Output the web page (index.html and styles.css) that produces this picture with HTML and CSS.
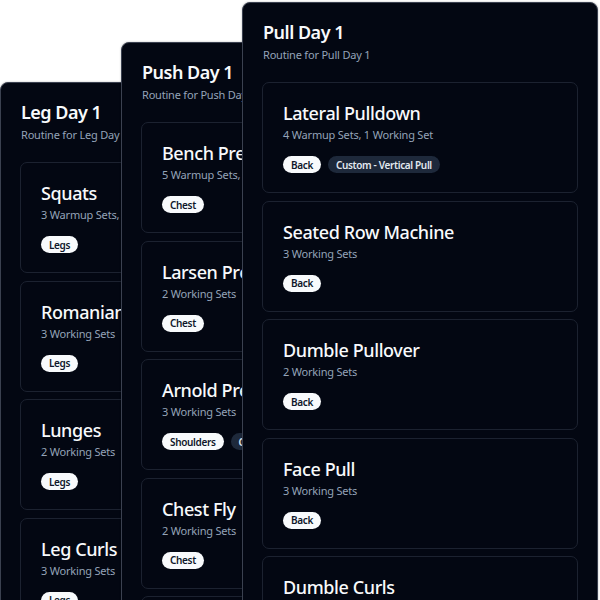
FILE: index.html
```html
<!DOCTYPE html>
<html>
<head>
<meta charset="utf-8">
<link rel="stylesheet" href="styles.css">
</head>
<body>
<div class="desk">
  <section class="routine routine-leg">
    <header class="routine-head">
      <h1 class="routine-title">Leg Day 1</h1>
      <p class="routine-sub">Routine for Leg Day 1</p>
    </header>
    <div class="ex-list">
      <article class="ex"><h2 class="ex-name">Squats</h2><p class="ex-sets">3 Warmup Sets, 1 Working Set</p><div class="tags"><span class="tag">Legs</span></div></article>
      <article class="ex"><h2 class="ex-name">Romanian Deadlift</h2><p class="ex-sets">3 Working Sets</p><div class="tags"><span class="tag">Legs</span></div></article>
      <article class="ex"><h2 class="ex-name">Lunges</h2><p class="ex-sets">2 Working Sets</p><div class="tags"><span class="tag">Legs</span></div></article>
      <article class="ex"><h2 class="ex-name">Leg Curls</h2><p class="ex-sets">3 Working Sets</p><div class="tags"><span class="tag">Legs</span></div></article>
    </div>
  </section>
  <section class="routine routine-push">
    <header class="routine-head">
      <h1 class="routine-title">Push Day 1</h1>
      <p class="routine-sub">Routine for Push Day 1</p>
    </header>
    <div class="ex-list">
      <article class="ex"><h2 class="ex-name">Bench Press</h2><p class="ex-sets">5 Warmup Sets, 1 Working Set</p><div class="tags"><span class="tag">Chest</span></div></article>
      <article class="ex"><h2 class="ex-name">Larsen Press</h2><p class="ex-sets">2 Working Sets</p><div class="tags"><span class="tag">Chest</span></div></article>
      <article class="ex"><h2 class="ex-name">Arnold Press</h2><p class="ex-sets">3 Working Sets</p><div class="tags"><span class="tag">Shoulders</span><span class="tag tag-dark">Custom</span></div></article>
      <article class="ex"><h2 class="ex-name">Chest Fly</h2><p class="ex-sets">2 Working Sets</p><div class="tags"><span class="tag">Chest</span></div></article>
      <article class="ex"><h2 class="ex-name">Triceps</h2><p class="ex-sets">2 Working Sets</p><div class="tags"><span class="tag">Arms</span></div></article>
    </div>
  </section>
  <section class="routine routine-pull">
    <header class="routine-head">
      <h1 class="routine-title">Pull Day 1</h1>
      <p class="routine-sub">Routine for Pull Day 1</p>
    </header>
    <div class="ex-list">
      <article class="ex"><h2 class="ex-name">Lateral Pulldown</h2><p class="ex-sets">4 Warmup Sets, 1 Working Set</p><div class="tags"><span class="tag">Back</span><span class="tag tag-dark">Custom - Vertical Pull</span></div></article>
      <article class="ex"><h2 class="ex-name">Seated Row Machine</h2><p class="ex-sets">3 Working Sets</p><div class="tags"><span class="tag">Back</span></div></article>
      <article class="ex"><h2 class="ex-name">Dumble Pullover</h2><p class="ex-sets">2 Working Sets</p><div class="tags"><span class="tag">Back</span></div></article>
      <article class="ex"><h2 class="ex-name">Face Pull</h2><p class="ex-sets">3 Working Sets</p><div class="tags"><span class="tag">Back</span></div></article>
      <article class="ex"><h2 class="ex-name">Dumble Curls</h2><p class="ex-sets">3 Working Sets</p><div class="tags"><span class="tag">Arms</span></div></article>
    </div>
  </section>
</div>
</body>
</html>
```
FILE: styles.css
```css
html, body {
  margin: 0;
  padding: 0;
  background: #ffffff;
  overflow: hidden;
}
body {
  width: 600px;
  height: 600px;
  font-family: "Noto Sans", "Open Sans", sans-serif;
}
.desk {
  position: relative;
  width: 600px;
  height: 600px;
  overflow: hidden;
}
.routine {
  position: absolute;
  width: 356px;
  height: 760px;
  box-sizing: border-box;
  background: #030712;
  border: 1px solid #3b4150;
  border-radius: 8px;
  padding: 0 19px;
  box-shadow: 0 0 2px rgba(0,0,0,0.3);
}
.routine-leg { left: 0; top: 82px; }
.routine-push { left: 121px; top: 42px; }
.routine-pull { left: 242px; top: 2px; }
.routine-head {
  padding: 17px 1px 19px;
}
.routine-title {
  margin: 0;
  font-size: 18px;
  line-height: 24px;
  font-weight: 600;
  letter-spacing: -0.5px;
  color: #f8fafc;
}
.routine-sub {
  margin: 3px 0 0;
  font-size: 11px;
  line-height: 16px;
  letter-spacing: -0.2px;
  color: #94a3b8;
}
.ex-list {
  display: flex;
  flex-direction: column;
  gap: 7.5px;
}
.ex {
  height: 111px;
  box-sizing: border-box;
  border: 1px solid #1c2230;
  border-radius: 7px;
  padding: 18px 20px 0;
}
.ex-name {
  margin: 0;
  font-size: 18px;
  line-height: 24px;
  font-weight: 500;
  letter-spacing: -0.4px;
  color: #f8fafc;
  white-space: nowrap;
}
.ex-sets {
  margin: 2px 0 0;
  font-size: 11px;
  line-height: 16px;
  letter-spacing: -0.2px;
  color: #94a3b8;
  white-space: nowrap;
}
.tags {
  display: flex;
  gap: 7px;
  margin-top: 13px;
}
.tag {
  display: inline-flex;
  align-items: center;
  height: 17px;
  padding: 0 8px;
  border-radius: 9px;
  background: #f8fafc;
  color: #0f172a;
  font-size: 10px;
  font-weight: 600;
  letter-spacing: -0.35px;
  white-space: nowrap;
}
.tag-dark {
  background: #1e293b;
  color: #e2e8f0;
}
```
